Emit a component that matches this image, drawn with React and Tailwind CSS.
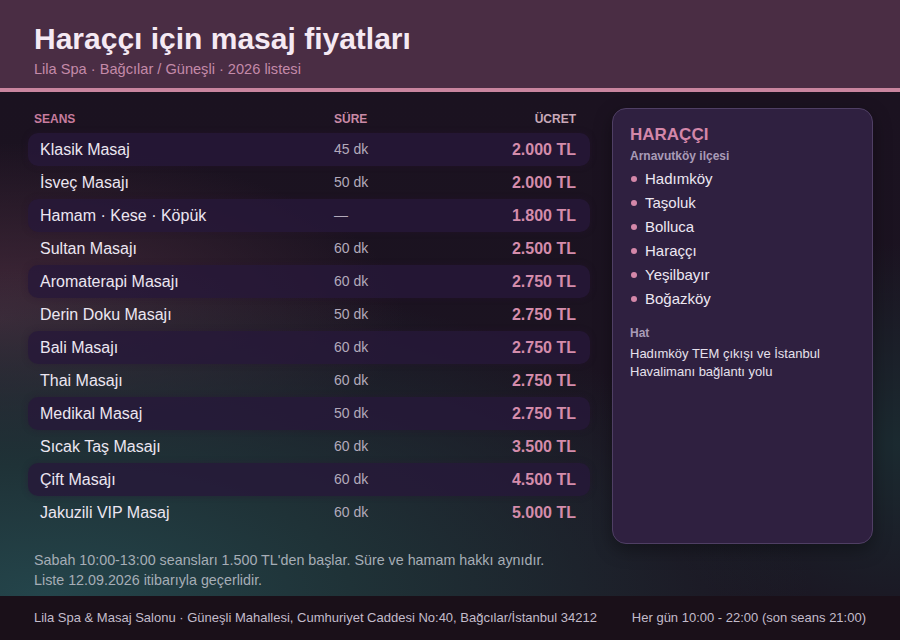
const services = [
  { name: 'Klasik Masaj', time: '45 dk', price: '2.000 TL' },
  { name: 'İsveç Masajı', time: '50 dk', price: '2.000 TL' },
  { name: 'Hamam · Kese · Köpük', time: '—', price: '1.800 TL' },
  { name: 'Sultan Masajı', time: '60 dk', price: '2.500 TL' },
  { name: 'Aromaterapi Masajı', time: '60 dk', price: '2.750 TL' },
  { name: 'Derin Doku Masajı', time: '50 dk', price: '2.750 TL' },
  { name: 'Bali Masajı', time: '60 dk', price: '2.750 TL' },
  { name: 'Thai Masajı', time: '60 dk', price: '2.750 TL' },
  { name: 'Medikal Masaj', time: '50 dk', price: '2.750 TL' },
  { name: 'Sıcak Taş Masajı', time: '60 dk', price: '3.500 TL' },
  { name: 'Çift Masajı', time: '60 dk', price: '4.500 TL' },
  { name: 'Jakuzili VIP Masaj', time: '60 dk', price: '5.000 TL' },
]

const neighbourhoods = ['Hadımköy', 'Taşoluk', 'Bolluca', 'Haraççı', 'Yeşilbayır', 'Boğazköy']

export default function App() {
  return (
    <div className="w-[900px] h-[640px] flex flex-col overflow-hidden font-['Liberation_Sans',Arial,sans-serif] bg-[#1a1320]">
      {/* header */}
      <header className="h-[92px] shrink-0 bg-[#4a2d44] border-b-4 border-[#c9859f] px-[34px] pt-[21px]">
        <h1 className="text-[30px] leading-[36px] font-bold text-[#f5e9f3]">Haraççı için masaj fiyatları</h1>
        <p className="text-[14.6px] leading-[20px] text-[#c48aa9] mt-[2px]">Lila Spa · Bağcılar / Güneşli · 2026 listesi</p>
      </header>

      <main className="flex-1 flex gap-[22px] pl-[28px] pr-[27px] pt-4 bg-[radial-gradient(ellipse_85%_65%_at_5%_100%,#24454b_0%,#1f3237_40%,transparent_100%),radial-gradient(ellipse_45%_35%_at_0%_45%,#43293a_0%,transparent_100%),radial-gradient(ellipse_30%_40%_at_100%_70%,#1b2a30_0%,transparent_100%),linear-gradient(180deg,#1b1220_0%,#1b1421_100%)]">
        <section className="w-[562px] flex flex-col">
          <div className="flex items-center h-[22px] mb-[3px] px-[6px] pr-[14px] text-[12px] font-bold">
            <span className="w-[300px] text-[#c77c9e]">SEANS</span>
            <span className="flex-1 text-[#c98aa6]">SÜRE</span>
            <span className="text-[#c9a9b9]">ÜCRET</span>
          </div>
          <div className="flex flex-col">
            {services.map((s, i) => (
              <div
                key={s.name}
                className={
                  'flex items-center h-[33px] pl-3 pr-[14px] rounded-[10px] ' +
                  (i % 2 === 0 ? 'bg-[#27183a]/80 shadow-[0_0_6px_rgba(40,20,50,0.4)]' : '')
                }
              >
                <span className="w-[294px] text-[16px] text-[#ece6f1]">{s.name}</span>
                <span className="flex-1 text-[14px] text-[#b3aabb]">{s.time}</span>
                <span className="text-[16px] font-bold text-[#d48cab]">{s.price}</span>
              </div>
            ))}
          </div>
          <div className="mt-[21px] px-[6px] text-[14.3px] leading-[20px] text-[#a6adb6]">
            <p>Sabah 10:00-13:00 seansları 1.500 TL'den başlar. Süre ve hamam hakkı aynıdır.</p>
            <p>Liste 12.09.2026 itibarıyla geçerlidir.</p>
          </div>
        </section>

        <aside className="w-[261px] h-[436px] rounded-[14px] bg-[#2f2040] border border-[#4f3f64] px-[17px] pt-[15px] shadow-[0_6px_18px_rgba(0,0,0,0.35)]">
          <h2 className="text-[17px] leading-[22px] font-bold text-[#d487a9]">HARAÇÇI</h2>
          <p className="mt-[2px] text-[12px] leading-[16px] font-bold text-[#a99bb7]">Arnavutköy ilçesi</p>
          <ul className="mt-[3px]">
            {neighbourhoods.map((n) => (
              <li key={n} className="flex items-center h-6 text-[15px] text-[#ede7f2]">
                <span className="w-[6px] h-[6px] rounded-full bg-[#d487a9] mr-[8px] ml-[1px]" />
                {n}
              </li>
            ))}
          </ul>
          <p className="mt-[14px] text-[12px] leading-[16px] font-bold text-[#a99bb7]">Hat</p>
          <p className="mt-[4px] text-[13px] leading-[18px] text-[#e6e0ec]">
            Hadımköy TEM çıkışı ve İstanbul Havalimanı bağlantı yolu
          </p>
        </aside>
      </main>

      <footer className="h-[44px] shrink-0 bg-[#1a1019] flex items-center justify-between px-[34px] text-[13px] text-[#c3bccb]">
        <span>Lila Spa &amp; Masaj Salonu · Güneşli Mahallesi, Cumhuriyet Caddesi No:40, Bağcılar/İstanbul 34212</span>
        <span>Her gün 10:00 - 22:00 (son seans 21:00)</span>
      </footer>
    </div>
  )
}
